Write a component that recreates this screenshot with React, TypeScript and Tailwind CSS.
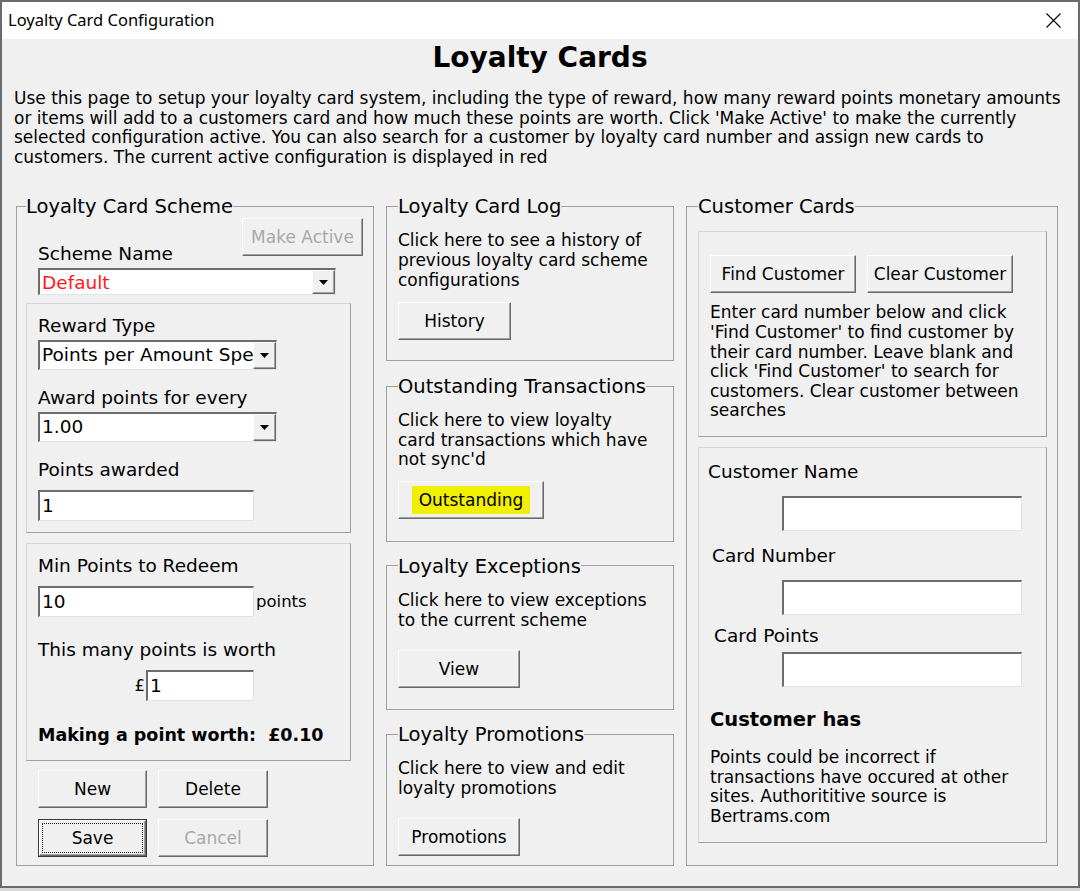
import type { ReactNode } from 'react';

const desc = 'text-[17px] leading-[19.6px]';
const label = 'text-[18.5px] leading-[20px]';
const raised = 'border border-t-white border-l-white border-r-[#696969] border-b-[#696969] shadow-[inset_-1px_-1px_0_#a0a0a0]';
const sunken = 'border-t-2 border-l-2 border-t-[#6d6d6d] border-l-[#6d6d6d] border-b border-r border-b-[#e3e3e3] border-r-[#e3e3e3] bg-white';
const panel = 'border border-t-[#d6d6d6] border-l-[#d6d6d6] border-r-[#a0a0a0] border-b-[#a0a0a0]';

function Btn({ children, className = '', disabled = false }: { children: ReactNode; className?: string; disabled?: boolean }) {
    return (
        <button
            className={`flex h-[38px] shrink-0 items-center justify-center bg-[#f0f0f0] text-[17px] leading-none ${raised} ${disabled ? 'text-[#a8a8a8]' : 'text-black'} ${className}`}
        >
            {children}
        </button>
    );
}

function TextBox({ value = '', className = '' }: { value?: string; className?: string }) {
    return (
        <div className={`h-[31px] shrink-0 pl-[2px] text-[18.5px] leading-[28px] ${sunken} ${className}`}>{value}</div>
    );
}

function Combo({ value, className = '', red = false }: { value: string; className?: string; red?: boolean }) {
    return (
        <div className={`flex shrink-0 ${sunken} ${className}`}>
            <div className={`min-w-0 flex-1 overflow-hidden whitespace-nowrap pl-[2px] text-[18.5px] leading-[26px] ${red ? 'text-[#ff1a1a]' : 'text-black'}`}>
                {value}
            </div>
            <div className={`flex w-[23px] items-center justify-center bg-[#f0f0f0] ${raised}`}>
                <svg width="9" height="5" viewBox="0 0 9 5">
                    <path d="M0 0h9L4.5 5z" fill="#000" />
                </svg>
            </div>
        </div>
    );
}

// etched group box with a caption sitting on its top line
function Frame({ title, children, className = '', wide = false }: { title: string; children: ReactNode; className?: string; wide?: boolean }) {
    return (
        <fieldset className={`m-0 min-w-0 border border-[#a0a0a0] p-0 ${className}`}>
            <legend className={`${wide ? 'ml-[11px]' : 'ml-[9px]'} p-0 pt-[2px] text-[19.5px] leading-[20px]`}>{title}</legend>
            {children}
        </fieldset>
    );
}

export default function App() {
    return (
        <div className="h-[891px] w-[1080px] bg-[#d9d9d9] font-['DejaVu_Sans',sans-serif] text-black">
            <div className="flex h-[888px] flex-col border-2 border-[#6b6b6b] bg-[#f0f0f0]">
                {/* title bar */}
                <div className="flex h-[37px] shrink-0 items-center justify-between bg-white pl-[6px] pr-[17px]">
                    <span className="font-['Noto_Sans',sans-serif] text-[16.5px] leading-none text-black">Loyalty Card Configuration</span>
                    <svg width="15" height="15" viewBox="0 0 15 15">
                        <path d="M0.5 0.5L14.5 14.5M14.5 0.5L0.5 14.5" stroke="#000" strokeWidth="1.1" />
                    </svg>
                </div>

                <h1 className="mt-[3px] text-center text-[28px] font-bold leading-[32px]">Loyalty Cards</h1>

                <p className={`mt-[15px] pl-[12px] whitespace-nowrap ${desc}`}>
                    Use this page to setup your loyalty card system, including the type of reward, how many reward points monetary amounts<br />
                    or items will add to a customers card and how much these points are worth. Click 'Make Active' to make the currently<br />
                    selected configuration active. You can also search for a customer by loyalty card number and assign new cards to<br />
                    customers. The current active configuration is displayed in red
                </p>

                <div className="mt-[28px] flex gap-[12px] pl-[14px]">
                    {/* left column */}
                    <Frame title="Loyalty Card Scheme" className="w-[358px]">
                        <div className="flex pl-[21px] pr-[10px] pt-[1px]">
                            <div className={`flex-1 pt-[26px] ${label}`}>Scheme Name</div>
                            <Btn disabled className="w-[121px]">Make Active</Btn>
                        </div>
                        <Combo value="Default" red className="ml-[21px] mt-[4px] h-[27px] w-[298px]" />

                        <div className={`ml-[9px] mt-[8px] w-[325px] pb-[11px] pl-[11px] pt-[12px] ${panel}`}>
                            <div className={label}>Reward Type</div>
                            <Combo value="Points per Amount Spent" className="mt-[4px] h-[30px] w-[239px]" />
                            <div className={`mt-[18px] ${label}`}>Award points for every</div>
                            <Combo value="1.00" className="mt-[4px] h-[30px] w-[239px]" />
                            <div className={`mt-[18px] ${label}`}>Points awarded</div>
                            <TextBox value="1" className="mt-[10px] w-[216px]" />
                        </div>

                        <div className={`ml-[9px] mt-[10px] w-[325px] pb-[15px] pl-[11px] pt-[12px] ${panel}`}>
                            <div className={label}>Min Points to Redeem</div>
                            <div className="mt-[10px] flex items-center">
                                <TextBox value="10" className="w-[216px]" />
                                <span className="ml-[2px] text-[16.5px] leading-none">points</span>
                            </div>
                            <div className={`mt-[23px] ${label}`}>This many points is worth</div>
                            <div className="mt-[10px] flex items-center">
                                <span className="w-[108px] pr-[1px] text-right text-[16.5px] leading-none">£</span>
                                <TextBox value="1" className="w-[108px]" />
                            </div>
                            <div className="mt-[24px] text-[17.5px] font-bold leading-[20px]">Making a point worth:&nbsp; £0.10</div>
                        </div>

                        <div className="mt-[9px] flex gap-[11px] pl-[21px]">
                            <Btn className="w-[109px]">New</Btn>
                            <Btn className="w-[110px]">Delete</Btn>
                        </div>
                        <div className="mt-[11px] flex gap-[11px] pb-[7px] pl-[21px]">
                            <div className="flex h-[38px] w-[109px] border border-[#3a3a3a] bg-[#f0f0f0]">
                                <div className={`flex flex-1 p-[2px] ${raised}`}>
                                    <div className="flex flex-1 items-center justify-center border border-dotted border-[#222] text-[17px] leading-none">Save</div>
                                </div>
                            </div>
                            <Btn disabled className="w-[110px]">Cancel</Btn>
                        </div>
                    </Frame>

                    {/* middle column */}
                    <div className="flex w-[288px] flex-col">
                        <Frame title="Loyalty Card Log" wide>
                            <div className="pb-[20px] pl-[11px] pt-[14px]">
                                <p className={desc}>Click here to see a history of<br />previous loyalty card scheme<br />configurations</p>
                                <Btn className="mt-[12px] w-[113px]">History</Btn>
                            </div>
                        </Frame>
                        <Frame title="Outstanding Transactions" wide className="mt-[14px]">
                            <div className="pb-[22px] pl-[11px] pt-[14px]">
                                <p className={desc}>Click here to view loyalty<br />card transactions which have<br />not sync'd</p>
                                <Btn className="mt-[11px] w-[146px]">
                                    <span className="bg-[#f0f000] px-[7px] pb-[5px] pt-[6px]">Outstanding</span>
                                </Btn>
                            </div>
                        </Frame>
                        <Frame title="Loyalty Exceptions" wide className="mt-[13px]">
                            <div className="pb-[21px] pl-[11px] pt-[14px]">
                                <p className={desc}>Click here to view exceptions<br />to the current scheme</p>
                                <Btn className="mt-[20px] w-[122px]">View</Btn>
                            </div>
                        </Frame>
                        <Frame title="Loyalty Promotions" wide className="mt-[13px]">
                            <div className="pb-[9px] pl-[11px] pt-[14px]">
                                <p className={desc}>Click here to view and edit<br />loyalty promotions</p>
                                <Btn className="mt-[20px] w-[122px]">Promotions</Btn>
                            </div>
                        </Frame>
                    </div>

                    {/* right column */}
                    <Frame title="Customer Cards" wide className="w-[372px]">
                        <div className="pb-[21px]">
                            <div className={`ml-[11px] mt-[14px] w-[349px] pb-[15px] pl-[11px] pt-[23px] ${panel}`}>
                                <div className="flex gap-[11px]">
                                    <Btn className="w-[146px]">Find Customer</Btn>
                                    <Btn className="w-[146px]">Clear Customer</Btn>
                                </div>
                                <p className={`mt-[10px] ${desc}`}>
                                    Enter card number below and click<br />
                                    'Find Customer' to find customer by<br />
                                    their card number. Leave blank and<br />
                                    click 'Find Customer' to search for<br />
                                    customers. Clear customer between<br />
                                    searches
                                </p>
                            </div>
                            <div className={`ml-[11px] mt-[10px] w-[349px] pb-[16px] pl-[9px] pt-[14px] ${panel}`}>
                                <div className={label}>Customer Name</div>
                                <TextBox className="ml-[74px] mt-[14px] h-[35px] w-[240px]" />
                                <div className={`ml-[4px] mt-[15px] ${label}`}>Card Number</div>
                                <TextBox className="ml-[74px] mt-[14px] h-[35px] w-[240px]" />
                                <div className={`ml-[6px] mt-[11px] ${label}`}>Card Points</div>
                                <TextBox className="ml-[74px] mt-[6px] h-[35px] w-[240px]" />
                                <div className="ml-[2px] mt-[23px] text-[19.5px] font-bold leading-[20px]">Customer has</div>
                                <p className={`ml-[2px] mt-[18px] ${desc}`}>
                                    Points could be incorrect if<br />
                                    transactions have occured at other<br />
                                    sites. Authorititive source is<br />
                                    Bertrams.com
                                </p>
                            </div>
                        </div>
                    </Frame>
                </div>
            </div>
        </div>
    );
}
